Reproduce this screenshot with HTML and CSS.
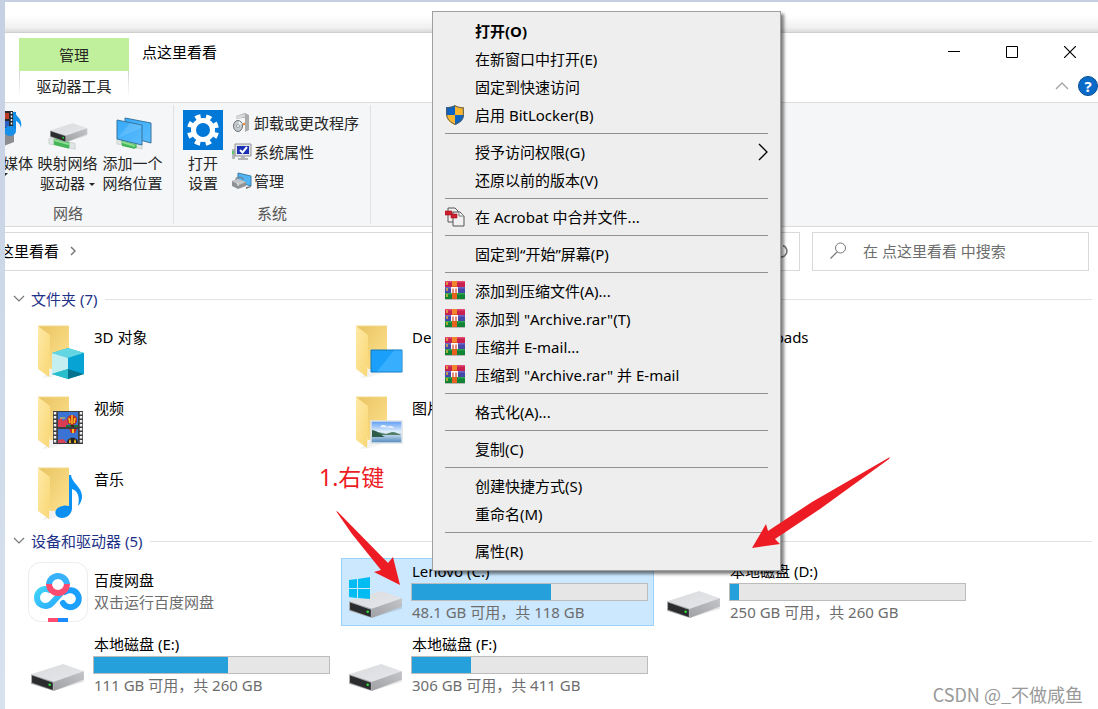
FILE: index.html
```html
<!DOCTYPE html>
<html lang="zh-CN">
<head>
  <meta charset="UTF-8">
  <title>点这里看看</title>
  <meta name="viewport" content="width=device-width, initial-scale=1">
  <link rel="stylesheet" href="styles.css">
</head>
<body>
  <!-- shared icons -->
  <svg class="defs" width="0" height="0" aria-hidden="true">
    <defs>
      <linearGradient id="folderBack" x1="0" y1="0" x2="1" y2="1">
        <stop offset="0" stop-color="#e8c462"/><stop offset="1" stop-color="#ffe391"/>
      </linearGradient>
      <linearGradient id="folderFront" x1="0" y1="0" x2="1" y2="1">
        <stop offset="0" stop-color="#ffe9a6"/><stop offset="1" stop-color="#f8d775"/>
      </linearGradient>
      <linearGradient id="driveTop" x1="0" y1="0" x2="1" y2="1">
        <stop offset="0" stop-color="#dadbdd"/><stop offset="1" stop-color="#e6e7ea"/>
      </linearGradient>
      <linearGradient id="driveSide" x1="0" y1="1" x2="1" y2="0">
        <stop offset="0" stop-color="#9fa1a4"/><stop offset="1" stop-color="#c3c5c8"/>
      </linearGradient>
      <linearGradient id="sky" x1="0" y1="0" x2="0" y2="1">
        <stop offset="0" stop-color="#5b9bf5"/><stop offset="0.5" stop-color="#e4f1fb"/><stop offset="1" stop-color="#4b86bb"/>
      </linearGradient>
      <linearGradient id="screen" x1="0" y1="0" x2="1" y2="1">
        <stop offset="0" stop-color="#35aafa"/><stop offset="1" stop-color="#5cbcfd"/>
      </linearGradient>
      <linearGradient id="note" x1="0" y1="0" x2="0" y2="1">
        <stop offset="0" stop-color="#0a94f8"/><stop offset="1" stop-color="#0b8ff0"/>
      </linearGradient>
      <linearGradient id="panLeft" x1="0" y1="0" x2="1" y2="1">
        <stop offset="0" stop-color="#3fd4fb"/><stop offset="1" stop-color="#2aa9fb"/>
      </linearGradient>
    </defs>
    <symbol id="folder" viewBox="0 0 48 54">
      <path d="M4 53l10-1 22-8-20-3z" fill="#000" opacity=".05"/>
      <path d="M1 1h30v43H12z" fill="url(#folderBack)"/>
      <path d="M0 1l12 9v26l-1 16L0 44z" fill="url(#folderFront)"/>
      <path d="M0 1h31" stroke="#f4d88a"/>
    </symbol>
    <symbol id="drive" viewBox="0 0 52 27">
      <path d="M22 26l29-9v-3z" fill="#000" opacity=".1"/>
      <path d="M0 10L31 0l20 7v1L22 17z" fill="url(#driveTop)"/>
      <path d="M22 17L51 7v8L22 26z" fill="url(#driveSide)"/>
      <path d="M0 10l22 7v9L0 19z" fill="#a5a6a8"/>
      <path d="M1 11l20 7v7L1 18z" fill="#2b2c2d"/>
      <circle cx="18" cy="20" r="1.2" fill="#2fe23a"/>
    </symbol>
    <symbol id="cable" viewBox="0 0 30 14">
      <path d="M1 2l5 1v6l-5-1zM22 6l6 1.500v6L22 12z" fill="#dfe6e4" stroke="#b9c2bf" stroke-width=".6"/>
      <path d="M6 2l16 4v7L6 9z" fill="#45b658"/>
      <path d="M6 3l16 4v2L6 5z" fill="#8bdc93"/>
    </symbol>
    <symbol id="rar" viewBox="0 0 20 20">
      <path d="M0 0h20v6H0z" fill="#c9214f"/><path d="M0 0h20v1.500H0z" fill="#e04a70"/>
      <path d="M0 6h20v6H0z" fill="#4747a8"/><path d="M0 6h20v1.500H0z" fill="#6a6bcb"/>
      <path d="M0 12h20v6H0z" fill="#128236"/><path d="M0 12h20v1.500H0z" fill="#2aa64e"/>
      <path d="M0 18.500h20" stroke="#a8a8a8" stroke-width=".8"/>
      <path d="M2 1v3M2 7v3M2 13v3" stroke="#f5c431" stroke-width="1.300"/>
      <path d="M7 0h5v18H7z" fill="#e5611c"/><path d="M7 0h5v5H7z" fill="#f0852b"/>
      <path d="M6 6h7v6H6z" fill="#fff"/><path d="M8 12V7.500M11 12V7.500" fill="none" stroke="#d8432b" stroke-width="1.200"/>
    </symbol>
  </svg>

  <div class="window">
    <div class="backdrop"></div>

    <header class="titlebar">
      <div class="tabs">
        <div class="tab-context">管理</div>
        <button class="tab">驱动器工具</button>
      </div>
      <h1 class="title">点这里看看</h1>
      <div class="title-right">
        <div class="window-buttons">
          <button aria-label="最小化"><svg width="12" height="12"><path d="M0 5.500h12" stroke="#000"/></svg></button>
          <button aria-label="最大化"><svg width="12" height="12"><path d="M.5.5h11v11H.5z" fill="none" stroke="#000"/></svg></button>
          <button aria-label="关闭"><svg width="12" height="12"><path d="M0 0l12 12M12 0L0 12" stroke="#000" stroke-width="1.200"/></svg></button>
        </div>
        <div class="ribbon-buttons">
          <button aria-label="折叠功能区"><svg width="14" height="8"><path d="M1 7l6-6 6 6" fill="none" stroke="#a3a3a3" stroke-width="1.300"/></svg></button>
          <button class="help" aria-label="帮助">?</button>
        </div>
      </div>
    </header>

    <div class="ribbon">
      <section class="group group-network">
        <div class="group-body">
          <button class="big big-media">
            <svg width="26" height="40" viewBox="0 0 26 40">
              <path d="M0 1h14v18H0z" fill="#26292c"/>
              <path d="M2 3h8v6H2z" fill="#bb3c25"/><path d="M2 11h8v6H2z" fill="#2c61c4"/>
              <path d="M12.500 2v17" stroke="#eee" stroke-width="1.500" stroke-dasharray="2 1.500"/>
              <path d="M0 22h15v10L0 38z" fill="#8b8d90"/>
              <path d="M15.500 20V2" stroke="#0b86e3" stroke-width="3"/>
              <path d="M15 1c2 6 9 7 7 17-1-5-4-7-7-8z" fill="#1790ea"/>
              <ellipse cx="11" cy="21" rx="6" ry="5" fill="#1790ea"/>
            </svg>
            <span>媒体</span>
            <i class="caret"></i>
          </button>
          <button class="big">
            <svg width="40" height="40" viewBox="0 0 40 40">
              <use href="#cable" x="0" y="26" width="29" height="14"/>
              <use href="#drive" x="2" y="13" width="38" height="20"/>
              <path d="M6 29l14 4v5L6 34z" fill="#45b658"/><path d="M6 29l14 4v2L6 31z" fill="#8bdc93"/>
            </svg>
            <span>映射网络</span>
            <span>驱动器<i class="caret"></i></span>
          </button>
          <button class="big">
            <svg width="40" height="40" viewBox="0 0 40 40">
              <path d="M12 8l26 5v20l-26-7z" fill="url(#screen)" stroke="#39759d"/>
              <use href="#cable" x="3" y="26" width="28" height="14"/>
              <path d="M4 10l25 5v20L4 29z" fill="url(#screen)" stroke="#39759d"/>
              <path d="M5 28l12-15 11 2v3z" fill="#fff" opacity=".12"/>
              <path d="M9 31l13 4v4L9 36z" fill="#45b658"/><path d="M9 31l13 4v2L9 33z" fill="#8bdc93"/>
            </svg>
            <span>添加一个</span>
            <span>网络位置</span>
          </button>
        </div>
        <div class="group-label">网络</div>
      </section>

      <section class="group group-system">
        <div class="group-body">
          <button class="big big-settings">
            <svg width="40" height="40" viewBox="0 0 40 40">
              <path d="M0 0h40v40H0z" fill="#0078d7"/>
              <circle cx="20" cy="20" r="9.500" fill="none" stroke="#fff" stroke-width="5"/>
              <circle cx="20" cy="20" r="13.500" fill="none" stroke="#fff" stroke-width="5" stroke-dasharray="5.300 5.303" transform="rotate(11 20 20)"/>
            </svg>
            <span>打开</span>
            <span>设置</span>
          </button>
          <div class="small-list">
            <button class="small">
              <svg width="20" height="20" viewBox="0 0 20 20">
                <path d="M4 3l9-3 4 2v15l-4 2V5L4 6z" fill="#a9abad"/><path d="M4 3l9-2v3L4 6z" fill="#d8d9db"/>
                <path d="M5 6l8-1v13l-8-1z" fill="#f6f6f6"/>
                <ellipse cx="6" cy="13" rx="4.500" ry="5.500" fill="#c3cad0" stroke="#6d7276"/><path d="M6 13l1-5 3 3z" fill="#eef6fb"/><circle cx="6" cy="13" r="1.500" fill="#fff" stroke="#6d7276" stroke-width=".6"/>
                <circle cx="12" cy="11" r="1.300" fill="#e98a3a"/>
              </svg>卸载或更改程序
            </button>
            <button class="small">
              <svg width="20" height="20" viewBox="0 0 20 20">
                <path d="M0 7h3v10H0z" fill="#b4b6b8"/><path d="M1 9v3" stroke="#3ccf4a" stroke-width="1.500"/>
                <path d="M3 2h16v12H3z" fill="#e4e5e7" stroke="#909294"/><path d="M5 4h12v8H5z" fill="#1a2fb5"/>
                <path d="M8 8l2.500 2.500L15 5" fill="none" stroke="#fff" stroke-width="2"/>
                <path d="M9 14h4v2h3v2H6v-2h3z" fill="#b1b3b5"/>
              </svg>系统属性
            </button>
            <button class="small">
              <svg width="20" height="20" viewBox="0 0 20 20">
                <path d="M6 2l13 3v10L6 11z" fill="#4fb5f7" stroke="#3c7fa9"/>
                <path d="M14 16l5-1v1l-5 2z" fill="#777"/>
                <path d="M0 10l6-2 8 3v4l-8 3-6-3z" fill="#8f9396"/><path d="M0 10l6-2 8 3-7 3z" fill="#c4c7ca"/>
                <path d="M4 9v-2l4-1 3 1v2" fill="none" stroke="#74787b"/><path d="M6 12v3" stroke="#eee"/>
              </svg>管理
            </button>
          </div>
        </div>
        <div class="group-label">系统</div>
      </section>
    </div>

    <div class="navbar">
      <div class="address">
        <span>这里看看</span>
        <svg class="crumb" width="6" height="10"><path d="M1 1l4 4-4 4" fill="none" stroke="#777" stroke-width="1.500"/></svg>
        <button class="refresh" aria-label="刷新"><svg width="16" height="16"><path d="M10 2.500a6 6 0 1 1-6 1M4 3V0M4 4h4" fill="none" stroke="#777" stroke-width="1.600"/></svg></button>
      </div>
      <label class="search">
        <svg width="17" height="17"><circle cx="10.500" cy="6" r="5" fill="none" stroke="#777"/><path d="M7 10l-6.500 6.500" stroke="#777" stroke-width="1.200"/></svg>
        <input type="text" placeholder="在 点这里看看 中搜索" aria-label="搜索">
      </label>
    </div>

    <main class="content">
      <h2 class="section-title">
        <svg width="12" height="8"><path d="M1 1l5 5 5-5" fill="none" stroke="#777" stroke-width="1.200"/></svg>文件夹 (7)
      </h2>
      <div class="tiles">
        <div class="tile folder">
          <svg class="folder-icon" width="50" height="56" viewBox="0 0 50 56">
            <use href="#folder" width="48" height="54"/>
            <path d="M30 23l16 5v21l-16 5-16-5V28z" fill="#15b5cf"/>
            <path d="M30 23l16 5-16 5-16-5z" fill="#62d6e2"/>
            <path d="M14 28l16 5v11l-16 5z" fill="#c3eff1"/>
            <path d="M30 33l16-5v21l-16-5z" fill="#06a3d4"/>
            <path d="M14 49l16-5v10z" fill="#29becb"/><path d="M30 44l16 5-16 5z" fill="#05738e"/>
          </svg>
          <span class="name">3D 对象</span>
        </div>
        <div class="tile folder">
          <svg class="folder-icon" width="50" height="56" viewBox="0 0 50 56">
            <use href="#folder" width="48" height="54"/>
            <path d="M15 25h31v22H15z" fill="#1aa0fb" stroke="#1376b8"/>
            <path d="M21 46.500l17-21h8v21z" fill="#45b4ff" opacity=".7"/>
          </svg>
          <span class="name">Desktop</span>
        </div>
        <div class="tile folder">
          <svg class="folder-icon" width="50" height="56" viewBox="0 0 50 56"><use href="#folder" width="48" height="54"/></svg>
          <span class="name">Downloads</span>
        </div>
        <div class="tile folder">
          <svg class="folder-icon" width="50" height="56" viewBox="0 0 50 56">
            <use href="#folder" width="48" height="54"/>
            <path d="M15 15h30v33H15z" fill="#3b3d40"/>
            <path d="M17 16v32M43 16v32" stroke="#eee" stroke-width="2.500" stroke-dasharray="2.500 1.500"/>
            <path d="M20 16h20v15H20zM20 33h20v14H20z" fill="#3a73d3"/>
            <path d="M20 24l3-2 2 3 3-2 2 4v4H20z" fill="#db3c52"/><path d="M28 29h12v2H28z" fill="#1e7140"/>
            <path d="M22 22h5M31 43h5" stroke="#f7cb31"/>
            <ellipse cx="34" cy="24" rx="5" ry="5" fill="#c62a20"/><path d="M34 19v9M31 22l1 5M37 22l-1 5" stroke="#f5c421" stroke-width="1.500"/><path d="M33 29h3v2h-3z" fill="#38271a"/>
            <path d="M31 33h8l-2 4h-4z" fill="#c7281e"/><path d="M34 33h2v4h-2z" fill="#f5c421"/>
            <path d="M29 47c0-7 11-7 11 0z" fill="#222"/><path d="M31 47c0-5 2-5 2 0zM36 47c0-5 2-5 2 0z" fill="#f5b521"/>
            <path d="M20 44l5-1 4 4h-9z" fill="#d84457"/>
          </svg>
          <span class="name">视频</span>
        </div>
        <div class="tile folder">
          <svg class="folder-icon" width="50" height="56" viewBox="0 0 50 56">
            <use href="#folder" width="48" height="54"/>
            <path d="M15 25h31v22H15z" fill="url(#sky)" stroke="#dfe3e7" stroke-width="1.500"/>
            <path d="M16 35c5 0 8 2 14 3l6-2c4 0 7 2 9 3H16z" fill="#547f69"/>
            <path d="M16 34c6 1 9 5 13 7H16z" fill="#2f5c4a"/>
            <path d="M24 31c2-3 6-2 7 0 3-2 6-1 7 1z" fill="#fff" opacity=".8"/>
          </svg>
          <span class="name">图片</span>
        </div>
        <div class="tile folder row-start">
          <svg class="folder-icon" width="50" height="56" viewBox="0 0 50 56">
            <use href="#folder" width="48" height="54"/>
            <path d="M31 8h2c1 9 12 12 11 23-1 4-2 6-4 8 2-9 0-15-6-17v19c0 6-5 10-10 10-9 0-9-11 1-12 2-1 4 0 6 0z" fill="url(#note)"/>
          </svg>
          <span class="name">音乐</span>
        </div>
      </div>

      <h2 class="section-title">
        <svg width="12" height="8"><path d="M1 1l5 5 5-5" fill="none" stroke="#777" stroke-width="1.200"/></svg>设备和驱动器 (5)
      </h2>
      <div class="tiles">
        <div class="tile app">
          <svg class="app-icon" width="60" height="60" viewBox="0 0 60 60">
            <rect x=".5" y=".5" width="59" height="59" rx="12" fill="#fff" stroke="#ececec"/>
            <g fill="none" stroke-width="6">
              <path d="M35 29L24 41a8.500 8.500 0 1 1-1-12" stroke="url(#panLeft)"/>
              <path d="M35 41a8.500 8.500 0 1 0 2-11" stroke="#1ba0fc" stroke-linecap="round"/>
              <path d="M21 23a9 9 0 0 1 18 0" stroke="#37b1fa"/>
              <path d="M21 22a9 9 0 0 0 18 0" stroke="#fd4c70"/>
            </g>
            <path d="M20 56h10v4H20z" fill="#fd4c70"/><path d="M30 56h10v4H30z" fill="#1a8cff"/>
          </svg>
          <div class="info">
            <span class="name">百度网盘</span>
            <span class="detail">双击运行百度网盘</span>
          </div>
        </div>
        <div class="tile drive selected">
          <svg class="drive-icon" width="54" height="42" viewBox="0 0 54 42">
            <use href="#drive" y="14" width="54" height="28"/>
            <path d="M0 3l8-1v9H0zM9 2l12-2v11H9zM0 12h8v9l-8-1zM9 12h12v10L9 21z" fill="#00bcf2"/>
          </svg>
          <div class="info">
            <span class="name">Lenovo (C:)</span>
            <div class="usage"><div class="used" style="width: 59%"></div></div>
            <span class="detail">48.1 GB 可用，共 118 GB</span>
          </div>
        </div>
        <div class="tile drive">
          <svg class="drive-icon" width="54" height="42" viewBox="0 0 54 42"><use href="#drive" y="14" width="54" height="28"/></svg>
          <div class="info">
            <span class="name">本地磁盘 (D:)</span>
            <div class="usage"><div class="used" style="width: 4%"></div></div>
            <span class="detail">250 GB 可用，共 260 GB</span>
          </div>
        </div>
        <div class="tile drive">
          <svg class="drive-icon" width="54" height="42" viewBox="0 0 54 42"><use href="#drive" y="14" width="54" height="28"/></svg>
          <div class="info">
            <span class="name">本地磁盘 (E:)</span>
            <div class="usage"><div class="used" style="width: 57%"></div></div>
            <span class="detail">111 GB 可用，共 260 GB</span>
          </div>
        </div>
        <div class="tile drive">
          <svg class="drive-icon" width="54" height="42" viewBox="0 0 54 42"><use href="#drive" y="14" width="54" height="28"/></svg>
          <div class="info">
            <span class="name">本地磁盘 (F:)</span>
            <div class="usage"><div class="used" style="width: 25%"></div></div>
            <span class="detail">306 GB 可用，共 411 GB</span>
          </div>
        </div>
      </div>
    </main>
  </div>

  <!-- right click menu -->
  <div class="menu" role="menu">
    <button class="default">打开(O)</button>
    <button>在新窗口中打开(E)</button>
    <button>固定到快速访问</button>
    <button>
      <svg width="20" height="20" viewBox="0 0 20 20">
        <path d="M10 0c3 2 6 2 9 2v7c0 5-4 9-9 11C5 18 1 14 1 9V2c3 0 6 0 9-2z" fill="#f9b52e"/>
        <path d="M10 0v10H1V2c3 0 6 0 9-2zM10 10h9c0 5-4 8-9 10z" fill="#0b63c4"/>
        <path d="M10 .8c3 1.700 6 2 8.300 2v6.500c0 5-3.800 8-8.300 10-4.500-2-8.300-5-8.300-10V2.800c2.300 0 5.300-.3 8.300-2z" fill="none" stroke="#555b60"/>
      </svg>启用 BitLocker(B)
    </button>
    <hr>
    <button class="submenu">授予访问权限(G)
      <svg width="10" height="18"><path d="M1 1l8 8-8 8" fill="none" stroke="#000" stroke-width="1.300"/></svg>
    </button>
    <button>还原以前的版本(V)</button>
    <hr>
    <button>
      <svg width="20" height="20" viewBox="0 0 20 20">
        <path d="M3 1h7l3 3v11H3z" fill="#f1f1f1" stroke="#555"/>
        <path d="M8 5h7l4 4v10H8z" fill="#f1f1f1" stroke="#555"/><path d="M14 5v4h5" fill="#fff" stroke="#777"/>
        <path d="M0 4h7v4H0zM6 7h6v4H6z" fill="#cf1f2e" stroke="#a31522" stroke-width=".6"/>
      </svg>在 Acrobat 中合并文件...
    </button>
    <hr>
    <button>固定到“开始”屏幕(P)</button>
    <hr>
    <button><svg width="20" height="20"><use href="#rar"/></svg>添加到压缩文件(A)...</button>
    <button><svg width="20" height="20"><use href="#rar"/></svg>添加到 "Archive.rar"(T)</button>
    <button><svg width="20" height="20"><use href="#rar"/></svg>压缩并 E-mail...</button>
    <button><svg width="20" height="20"><use href="#rar"/></svg>压缩到 "Archive.rar" 并 E-mail</button>
    <hr>
    <button>格式化(A)...</button>
    <hr>
    <button>复制(C)</button>
    <hr>
    <button>创建快捷方式(S)</button>
    <button>重命名(M)</button>
    <hr>
    <button>属性(R)</button>
  </div>

  <!-- annotations -->
  <div class="note">1.右键</div>
  <svg class="arrow arrow-drive" width="66" height="75" viewBox="0 0 66 75">
    <path d="M0 0l2 1 50 51 5-6 7 28-26-13 7-2L16 23z" fill="#ed1c24"/>
  </svg>
  <svg class="arrow arrow-properties" width="140" height="93" viewBox="0 0 140 93">
    <path d="M138 0l-1 2-69 50-45 30 5 5-28 4 14-24 2 7 44-29z" fill="#ed1c24"/>
  </svg>
  <div class="watermark">CSDN @_不做咸鱼</div>
</body>
</html>
```
FILE: styles.css
```css
* {
  box-sizing: border-box;
}
body {
  margin: 0;
  padding: 2px 0 0 5px;
  min-height: 100vh;
  position: relative;
  overflow: hidden;
  background: linear-gradient(#c5d0e3, #d8e2ef);
  font-family: "Noto Sans", "Noto Sans CJK SC", sans-serif;
  font-size: 15px;
  line-height: 20px;
  color: #000;
}
button {
  margin: 0;
  padding: 0;
  border: none;
  background: none;
  font: inherit;
  color: inherit;
}
svg {
  display: block;
  flex: none;
}
.defs {
  position: absolute;
}
.window {
  background: #fff;
  min-height: calc(100vh - 2px);
  overflow: hidden;
}
.backdrop {
  height: 31px;
  background: linear-gradient(#fff 45%, #f0f0f0 85%, #dcdcdc);
  border-bottom: 1px solid #cfcfcf;
}

/* title bar */
.titlebar {
  display: flex;
  height: 69px;
}
.tabs {
  width: 110px;
  margin: 5px 0 0 14px;
  color: #262626;
  text-align: center;
}
.tab-context {
  height: 33px;
  line-height: 34px;
  background: #c1f09c;
}
.tab {
  display: block;
  width: 100%;
  height: 25px;
  line-height: 30px;
  border: 1px solid;
  border-width: 0 1px;
  border-image: linear-gradient(#d0d0d0, #fff) 1;
}
.title {
  margin: 9px 0 0 13px;
  font-size: 15px;
  font-weight: normal;
}
.title-right {
  margin-left: auto;
}
.window-buttons {
  display: flex;
  margin-right: -1px;
}
.window-buttons button {
  display: flex;
  align-items: center;
  justify-content: center;
  width: 58px;
  height: 38px;
}
.ribbon-buttons {
  display: flex;
  align-items: center;
  justify-content: flex-end;
  gap: 9px;
  padding-top: 5px;
}
.help {
  width: 20px;
  height: 20px;
  border-radius: 50%;
  border: 1px solid #0b4f93;
  background: #0a6ac8;
  color: #fff;
  font-weight: bold;
  line-height: 18px;
}

/* ribbon */
.ribbon {
  display: flex;
  height: 125px;
  padding: 2px 0;
  background: #f5f6f7;
  border: 1px solid #dadbdc;
  border-width: 1px 0;
  color: #262626;
}
.group {
  border-right: 1px solid #e0e1e3;
}
.group-body {
  display: flex;
  height: 98px;
  padding-top: 5px;
}
.group-network {
  width: 211px;
  margin-left: -42px;
}
.group-system {
  width: 197px;
}
.group-label {
  text-align: center;
  color: #555;
}
.big {
  display: flex;
  flex-direction: column;
  align-items: center;
  width: 65px;
}
.big span {
  white-space: nowrap;
}
.big svg {
  margin-bottom: 3px;
}
.big-media {
  width: 72px;
  padding-right: 2px;
  align-items: flex-end;
}
.big-media svg {
  margin-right: 8px;
}
.big-media .caret {
  margin-right: 25px;
}
.big-settings {
  width: 58px;
}
.caret {
  display: inline-block;
  margin-left: 4px;
  border: 3px solid transparent;
  border-top-color: #262626;
  border-bottom: none;
  vertical-align: middle;
}
.small-list {
  display: flex;
  flex-direction: column;
  gap: 9px;
  padding: 3px 0 0;
}
.small {
  display: flex;
  align-items: center;
  gap: 2px;
}

/* address and search */
.navbar {
  display: flex;
  gap: 12px;
  padding: 5px 9px 0 0;
}
.address,
.search {
  display: flex;
  align-items: center;
  height: 39px;
  padding-bottom: 2px;
  border: 1px solid #d9d9d9;
}
.address {
  flex: 1;
  margin-left: -7px;
  padding-right: 10px;
}
.crumb {
  margin-left: 11px;
}
.refresh {
  margin-left: auto;
}
.search {
  width: 277px;
  padding-left: 17px;
  gap: 16px;
}
.search input {
  flex: 1;
  min-width: 0;
  padding: 0;
  border: none;
  outline: none;
  font: inherit;
}
.search input::placeholder {
  color: #6d6d6d;
}

/* file list */
.content {
  padding: 16px 6px 10px 8px;
}
.section-title {
  display: flex;
  align-items: center;
  gap: 6px;
  height: 24px;
  margin: 0 0 5px;
  font-size: 15px;
  font-weight: normal;
  color: #1e3287;
}
.section-title::after {
  content: "";
  flex: 1;
  height: 1px;
  margin-left: 2px;
  background: #e2e2e2;
}
.tiles {
  display: grid;
  grid-template-columns: repeat(auto-fill, 313px);
  gap: 5px;
  margin: 0 0 5px 10px;
}
.tile {
  display: flex;
  border: 1px solid transparent;
}
.folder {
  height: 66px;
  padding: 8px 0 0 14px;
}
.folder-icon {
  margin-right: 6px;
}
.folder .name {
  padding: 2px 0 0;
}
.row-start {
  grid-column: 1;
}
.app,
.drive {
  height: 68px;
  padding-top: 2px;
}
.app {
  padding-left: 4px;
}
.app-icon {
  margin: 1px 5px 0 0;
}
.app .info {
  padding-top: 9px;
}
.drive {
  padding-left: 7px;
}
.drive-icon {
  margin: 16px 8px 0 0;
}
.selected {
  background: #cce8ff;
  border-color: #99d1ff;
}
.name,
.detail {
  display: block;
  padding-left: 1px;
}
.app .name {
  margin-bottom: 2px;
}
.detail {
  color: #6d6d6d;
}
.usage {
  width: 237px;
  height: 18px;
  margin: 2px 0 1px;
  border: 1px solid #bcbcbc;
  background: #e6e6e6;
}
.used {
  height: 100%;
  background: #26a0da;
}

/* context menu */
.menu {
  position: absolute;
  left: 432px;
  top: 11px;
  width: 349px;
  padding: 5px 12px;
  background: #eee;
  border: 1px solid #a0a0a0;
  box-shadow: 3px 3px 3px rgba(0, 0, 0, 0.5);
}
.menu button {
  display: flex;
  align-items: center;
  width: 100%;
  height: 28px;
  padding: 0 0 1px 30px;
  white-space: nowrap;
}
.menu button > svg:first-child {
  margin: 0 10px 0 -30px;
}
.menu .default {
  font-weight: bold;
}
.menu .submenu {
  justify-content: space-between;
}
.menu .submenu > svg:first-child {
  margin: 0;
}
.menu hr {
  height: 1px;
  margin: 4px 0;
  border: none;
  background: #919191;
}

/* notes drawn over the window */
.note {
  position: absolute;
  left: 319px;
  top: 461px;
  font-size: 23px;
  line-height: 32px;
  color: #ed1c24;
}
.arrow {
  position: absolute;
}
.arrow-drive {
  left: 336px;
  top: 511px;
}
.arrow-properties {
  left: 752px;
  top: 457px;
}
.watermark {
  position: absolute;
  right: 15px;
  bottom: 8px;
  font-family: "Noto Sans CJK SC", sans-serif;
  font-size: 18px;
  line-height: 24px;
  color: #999;
}
```
